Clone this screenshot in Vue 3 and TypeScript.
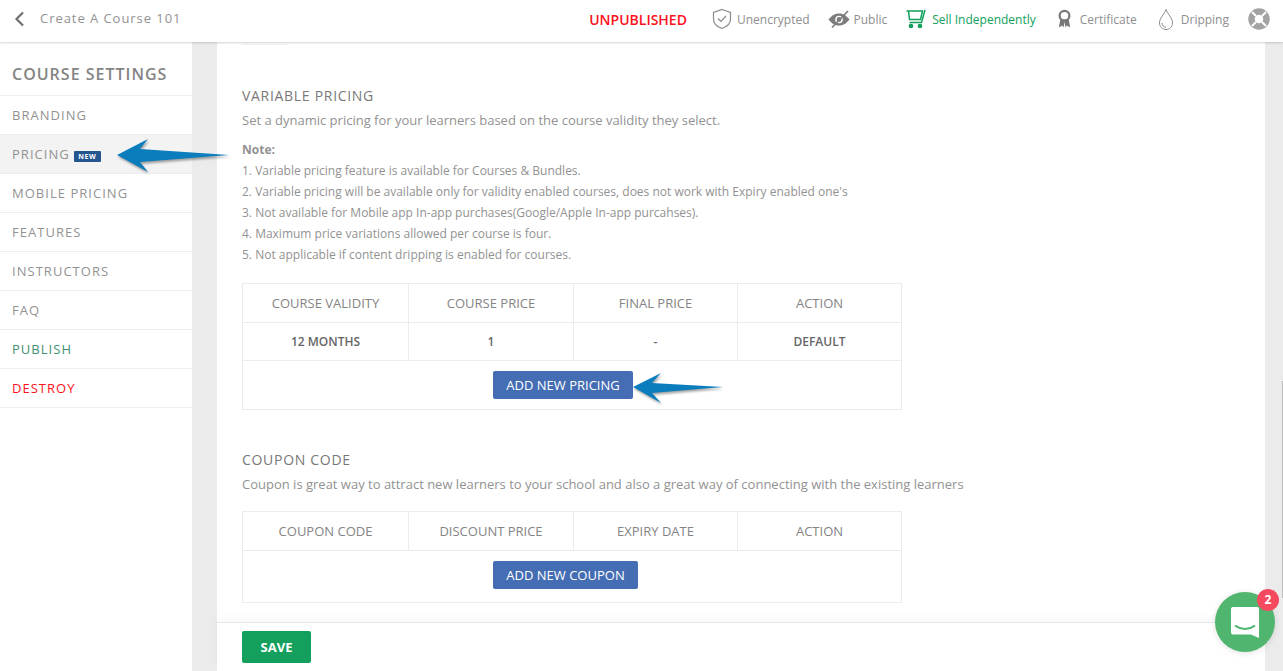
<template>
  <div class="page">
    <header class="topbar">
      <svg class="back" width="12" height="16" viewBox="0 0 12 16"><path d="M10 1.500 L3.500 8 L10 14.500" fill="none" stroke="#6f6f6f" stroke-width="2.200"/></svg>
      <span class="course-name">Create A Course 101</span>
      <div class="status">
        <span class="unpublished">UNPUBLISHED</span>
        <span class="stat">
          <svg width="20" height="22" viewBox="0 0 20 22" fill="none" stroke="#8a8a8a" stroke-width="1.200"><path d="M10 1.500 L18.500 4.500 V11 C18.500 15.500 14.500 19 10 20.500 C5.500 19 1.500 15.500 1.500 11 V4.500 Z"/><path d="M6 10.500 L9 13.500 L14 8"/></svg>
          Unencrypted
        </span>
        <span class="stat public">
          <svg width="22" height="20" viewBox="0 0 22 20"><path d="M0.500 10.500 C4 6 7.500 4.500 11 4.500 C14.500 4.500 18 6 21.500 10.500 C18 15 14.500 16.500 11 16.500 C7.500 16.500 4 15 0.500 10.500 Z" fill="#7d7d7d"/><circle cx="11" cy="10.500" r="3.800" fill="#fff"/><circle cx="11" cy="10.500" r="2.400" fill="#7d7d7d"/><path d="M4 18.500 L20 2" stroke="#7d7d7d" stroke-width="1.600"/></svg>
          Public
        </span>
        <span class="stat green">
          <svg width="20" height="20" viewBox="0 0 20 20" fill="none" stroke="#12a05c" stroke-width="1.500"><path d="M0.500 2 H16.500 L14.500 10.500 H3.500 L2.500 2"/><path d="M3.500 13.500 H15.500 L19 1"/><circle cx="5" cy="17" r="1.600" fill="#12a05c"/><circle cx="14" cy="17" r="1.600" fill="#12a05c"/></svg>
          Sell Independently
        </span>
        <span class="stat cert">
          <svg width="15" height="22" viewBox="0 0 16 22"><circle cx="8" cy="7.500" r="5.200" fill="none" stroke="#777" stroke-width="2.400"/><path d="M3.500 11.500 L2 20 L5.500 18 L7 20 L8 14 L9 20 L10.500 18 L14 20 L12.500 11.500 Z" fill="#777"/></svg>
          Certificate
        </span>
        <span class="stat drip">
          <svg width="16" height="23" viewBox="0 0 16 23" fill="none" stroke="#8a8a8a" stroke-width="1"><path d="M8 1.500 C6.500 6 1.500 10 1.500 15 C1.500 18.800 4.500 21.500 8 21.500 C11.500 21.500 14.500 18.800 14.500 15 C14.500 10 9.500 6 8 1.500 Z"/><path d="M4 15 C4 17.500 5.500 19 8 19.200"/></svg>
          Dripping
        </span>
        <svg class="help" width="22" height="22" viewBox="0 0 22 22"><circle cx="11" cy="11" r="7.500" fill="none" stroke="#a3a3a3" stroke-width="6.500"/><path d="M4 4 L8 8 M18 4 L14 8 M4 18 L8 14 M18 18 L14 14" stroke="#fff" stroke-width="2"/></svg>
      </div>
    </header>

    <div class="body">
      <aside class="sidebar">
        <h2 class="side-title">COURSE SETTINGS</h2>
        <nav>
          <a v-for="item in navItems" :key="item.label" class="nav-item" :class="[item.cls]">
            {{ item.label }}
            <span v-if="item.isNew" class="new-tag">NEW</span>
          </a>
        </nav>
      </aside>

      <main class="content">
        <div class="scroll">
          <div class="stub"></div>
          <section class="block">
            <h3>VARIABLE PRICING</h3>
            <p class="lead">Set a dynamic pricing for your learners based on the course validity they select.</p>
            <div class="notes">
              <strong>Note:</strong>
              <div v-for="note in notes" :key="note">{{ note }}</div>
            </div>
            <div class="table">
              <div class="row head">
                <div v-for="c in pricingHead" :key="c" class="cell">{{ c }}</div>
              </div>
              <div class="row data">
                <div v-for="c in pricingRow" :key="c" class="cell">{{ c }}</div>
              </div>
              <div class="action-row pricing-action">
                <button class="btn">ADD NEW PRICING</button>
              </div>
            </div>
          </section>

          <section class="block coupon">
            <h3>COUPON CODE</h3>
            <p class="lead">Coupon is great way to attract new learners to your school and also a great way of connecting with the existing learners</p>
            <div class="table coupon-table">
              <div class="row head">
                <div v-for="c in couponHead" :key="c" class="cell">{{ c }}</div>
              </div>
              <div class="action-row coupon-action">
                <button class="btn">ADD NEW COUPON</button>
              </div>
            </div>
          </section>
        </div>
        <footer class="save-bar">
          <button class="save">SAVE</button>
        </footer>
      </main>
      <div class="rail"></div>
    </div>

    <!-- annotation arrows drawn over the page -->
    <svg class="arrow arrow-side" width="118" height="38" viewBox="0 0 118 38">
      <path d="M2 19 L33 3 L25 13 L114 19 L25 26 L33 36 Z" fill="#0b7dbd"/>
    </svg>
    <svg class="arrow arrow-btn" width="94" height="36" viewBox="0 0 94 36">
      <path d="M2 17 L30 3 L21 13 L92 17 L21 23 L30 33 Z" fill="#0b7dbd"/>
    </svg>

    <div class="chat">
      <svg width="30" height="32" viewBox="0 0 30 32"><path d="M3 1 H27 A2 2 0 0 1 29 3 V32 L21 28.500 H3 A2 2 0 0 1 1 26.500 V3 A2 2 0 0 1 3 1 Z" fill="#fff"/><path d="M5 19.500 C11 24 19 24 25 19.500" fill="none" stroke="#50b56e" stroke-width="2"/></svg>
      <span class="chat-badge">2</span>
    </div>
  </div>
</template>

<script setup lang="ts">
interface NavItem {
  label: string;
  cls?: string;
  isNew?: boolean;
}

const navItems: NavItem[] = [
  { label: 'BRANDING' },
  { label: 'PRICING', cls: 'active', isNew: true },
  { label: 'MOBILE PRICING' },
  { label: 'FEATURES' },
  { label: 'INSTRUCTORS' },
  { label: 'FAQ' },
  { label: 'PUBLISH', cls: 'publish' },
  { label: 'DESTROY', cls: 'destroy' },
];

const notes = [
  '1. Variable pricing feature is available for Courses & Bundles.',
  "2. Variable pricing will be available only for validity enabled courses, does not work with Expiry enabled one's",
  '3. Not available for Mobile app In-app purchases(Google/Apple In-app purcahses).',
  '4. Maximum price variations allowed per course is four.',
  '5. Not applicable if content dripping is enabled for courses.',
];

const pricingHead = ['COURSE VALIDITY', 'COURSE PRICE', 'FINAL PRICE', 'ACTION'];
const pricingRow = ['12 MONTHS', '1', '-', 'DEFAULT'];
const couponHead = ['COUPON CODE', 'DISCOUNT PRICE', 'EXPIRY DATE', 'ACTION'];
</script>

<style>
html, body {
  margin: 0;
  overflow: hidden;
}
</style>

<style scoped>
.page {
  position: relative;
  width: 1283px;
  height: 671px;
  overflow: hidden;
  display: flex;
  flex-direction: column;
  font-family: "Open Sans", sans-serif;
  background: #ebebeb;
  color: #929292;
}

.topbar {
  position: relative;
  z-index: 2;
  height: 42px;
  flex: none;
  box-sizing: border-box;
  display: flex;
  align-items: center;
  background: #fff;
  box-shadow: 0 1px 2px rgba(0, 0, 0, 0.18);
  padding: 0 13px 4px;
}

.course-name {
  margin-left: 15px;
  font-size: 13px;
  letter-spacing: 0.95px;
  color: #929292;
  position: relative;
  top: -1px;
}

.status {
  margin-left: auto;
  display: flex;
  align-items: center;
}

.unpublished {
  font-size: 14px;
  font-weight: 600;
  color: #fb1220;
  margin-right: 25px;
}

.stat {
  display: flex;
  align-items: center;
  gap: 5px;
  font-size: 12px;
  color: #8e8e8e;
  margin-right: 18px;
}

.stat.public {
  gap: 4px;
  margin-right: 19px;
}

.stat.green {
  gap: 6px;
  margin-right: 21px;
  color: #12a05c;
}

.stat.cert {
  gap: 8px;
  margin-right: 21px;
}

.stat.drip {
  gap: 7px;
  margin-right: 19px;
}

.help {
  display: block;
}

.body {
  flex: 1;
  display: flex;
  min-height: 0;
}

.sidebar {
  width: 192px;
  flex: none;
  background: #fff;
}

.side-title {
  margin: 0;
  padding: 21px 12px 0;
  height: 54px;
  box-sizing: border-box;
  font-size: 16px;
  line-height: 22px;
  font-weight: 600;
  letter-spacing: 1px;
  color: #848484;
  border-bottom: 1px solid #eee;
}

.nav-item {
  display: flex;
  align-items: center;
  height: 38px;
  padding: 0 12px;
  border-bottom: 1px solid #eee;
  font-size: 13px;
  letter-spacing: 1.03px;
  color: #929292;
}

.nav-item.active {
  background: #f3f3f3;
}

.nav-item.publish {
  color: #3f8f72;
}

.nav-item.destroy {
  color: #fb1220;
}

.new-tag {
  margin-left: 4px;
  margin-top: 4px;
  width: 27px;
  height: 11px;
  line-height: 11px;
  text-align: center;
  background: #24558f;
  border-radius: 1px;
  color: #fff;
  font-size: 7px;
  font-weight: 700;
  letter-spacing: 0.6px;
}

.content {
  margin-left: 25px;
  width: 1048px;
  flex: none;
  background: #fff;
  display: flex;
  flex-direction: column;
}

.scroll {
  flex: 1;
  min-height: 0;
  padding: 0 25px;
  overflow: hidden;
}

.stub {
  width: 46px;
  height: 3px;
  margin-bottom: 41px;
  border-bottom: 1px solid #f3f3f3;
  box-sizing: border-box;
}

.block h3 {
  margin: 0;
  font-size: 14px;
  line-height: 19px;
  font-weight: 400;
  letter-spacing: 0.7px;
  color: #787878;
}

.lead {
  margin: 6px 0 0;
  font-size: 13px;
  line-height: 19px;
  color: #929292;
}

.notes {
  margin-top: 10px;
  font-size: 12px;
  line-height: 21px;
  color: #929292;
}

.notes strong {
  display: block;
  line-height: 20px;
  font-weight: 700;
}

.table {
  margin-top: 18px;
  width: 660px;
  box-sizing: border-box;
  border: 1px solid #ececec;
}

.row {
  display: grid;
  grid-template-columns: 166px 165px 164px 1fr;
  border-bottom: 1px solid #ececec;
}

.cell {
  text-align: center;
  font-size: 13px;
  border-right: 1px solid #ececec;
}

.cell:last-child {
  border-right: none;
}

.row.head .cell {
  height: 38px;
  line-height: 38px;
  color: #848484;
}

.row.data .cell {
  height: 37px;
  line-height: 37px;
  font-size: 12px;
  font-weight: 600;
  color: #666;
}

.action-row {
  display: flex;
  justify-content: center;
}

.pricing-action {
  height: 48px;
  padding-top: 10px;
  box-sizing: border-box;
  padding-right: 18px;
}

.coupon-action {
  height: 51px;
  padding-top: 10px;
  box-sizing: border-box;
  padding-right: 13px;
}

.btn {
  height: 28px;
  padding: 0 13px;
  border: none;
  border-radius: 2px;
  background: #446db4;
  color: #fff;
  font-family: inherit;
  font-size: 13px;
}

.coupon {
  margin-top: 40px;
}

.coupon-table {
  margin-top: 17px;
}

.save-bar {
  flex: none;
  height: 49px;
  box-sizing: border-box;
  border-top: 1px solid #e8e8e8;
  box-shadow: 0 -4px 8px rgba(0, 0, 0, 0.03);
  padding: 8px 25px 0;
  background: #fff;
}

.save {
  width: 69px;
  height: 32px;
  border: none;
  border-radius: 2px;
  background: #14a05c;
  color: #fff;
  font-family: inherit;
  font-size: 13px;
  font-weight: 700;
}

.rail {
  flex: 1;
  background: #ebebeb;
  position: relative;
}

/* scrollbar thumb, a thin line at the window edge */
.rail::after {
  content: "";
  position: absolute;
  right: 0;
  top: 339px;
  width: 1px;
  height: 217px;
  background: #bdbdbd;
}

.arrow {
  position: absolute;
  filter: drop-shadow(1px 2px 1px rgba(0, 0, 0, 0.35));
}

.arrow-side {
  left: 115px;
  top: 136px;
}

.arrow-btn {
  left: 631px;
  top: 370px;
}

.chat {
  position: absolute;
  left: 1215px;
  top: 592px;
  width: 60px;
  height: 60px;
  border-radius: 50%;
  background: #50b56e;
  display: flex;
  align-items: center;
  justify-content: center;
  box-shadow: 0 1px 6px rgba(0, 0, 0, 0.12);
}

.chat-badge {
  position: absolute;
  left: 42px;
  top: -3px;
  width: 22px;
  height: 22px;
  border-radius: 50%;
  background: #f5495f;
  color: #fff;
  font-size: 12px;
  font-weight: 700;
  line-height: 22px;
  text-align: center;
}
</style>
